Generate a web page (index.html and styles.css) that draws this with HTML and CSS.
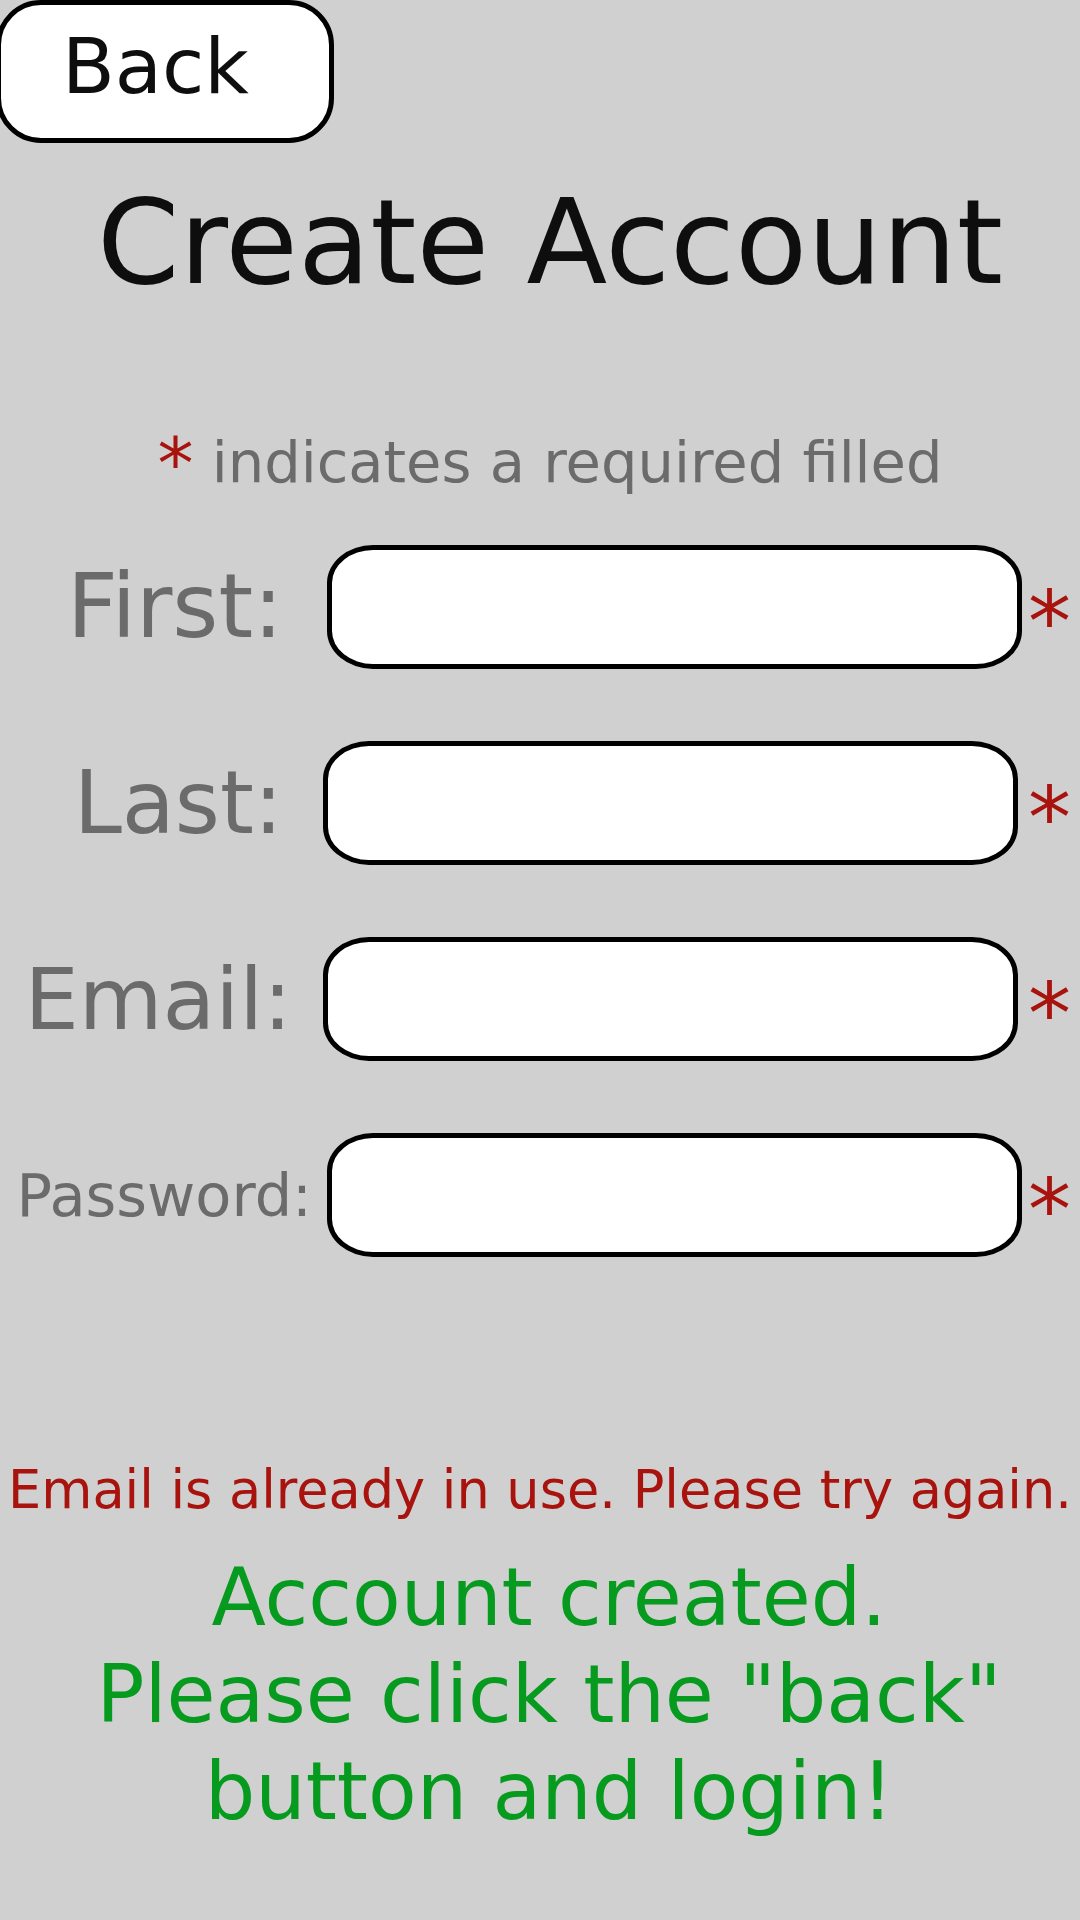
FILE: index.html
```html
<!DOCTYPE html>
<html lang="en">
<head>
<meta charset="utf-8">
<title>Create Account</title>
<link rel="stylesheet" href="styles.css">
</head>
<body>
<main class="page">
  <button class="back-btn" type="button">Back</button>
  <h1 class="title">Create Account</h1>
  <p class="note"><span class="note-star">*</span> indicates a required filled</p>
  <form class="form">
    <div class="row">
      <label class="label label-first" for="first">First:</label>
      <input class="field" id="first" type="text">
      <span class="req">*</span>
    </div>
    <div class="row row-narrow">
      <label class="label label-last" for="last">Last:</label>
      <input class="field" id="last" type="text">
      <span class="req">*</span>
    </div>
    <div class="row row-narrow">
      <label class="label label-email" for="email">Email:</label>
      <input class="field" id="email" type="text">
      <span class="req">*</span>
    </div>
    <div class="row">
      <label class="label label-password" for="password">Password:</label>
      <input class="field" id="password" type="password">
      <span class="req">*</span>
    </div>
  </form>
  <p class="error">Email is already in use. Please try again.</p>
  <p class="success">Account created.<br>Please click the "back"<br>button and login!</p>
</main>
</body>
</html>
```

FILE: styles.css
```css
html, body {
  margin: 0;
  padding: 0;
}

body {
  background: #d0d0d0;
  font-family: "DejaVu Sans", "Liberation Sans", sans-serif;
  width: 1080px;
  height: 1920px;
  overflow: hidden;
}

.page {
  display: flex;
  flex-direction: column;
}

.back-btn {
  align-self: flex-start;
  box-sizing: border-box;
  width: 338px;
  height: 143px;
  margin: 0 0 0 -4px;
  padding: 0 0 10px 61px;
  border: 5px solid #000;
  border-radius: 45px;
  background: #fff;
  color: #0e0e0e;
  font-family: inherit;
  font-size: 77px;
  line-height: 1;
  text-align: left;
  display: block;
}

.title {
  margin: 40px 0 0;
  padding-left: 20px;
  font-size: 118px;
  line-height: 118px;
  font-weight: normal;
  color: #0e0e0e;
  text-align: center;
}

.note {
  margin: 133px 0 0;
  padding-left: 20px;
  font-size: 57.5px;
  line-height: 57px;
  color: #6b6b6b;
  text-align: center;
}

.note-star {
  color: #a8130d;
  font-size: 72px;
  line-height: 0;
  vertical-align: -6px;
}

.form {
  margin-top: 54px;
  display: flex;
  flex-direction: column;
  gap: 72px;
}

.row {
  display: flex;
  align-items: center;
  height: 124px;
}

.label {
  flex: 0 0 327px;
  box-sizing: border-box;
  text-align: right;
  white-space: nowrap;
  color: #6b6b6b;
  line-height: 1;
}

.row-narrow .label {
  flex-basis: 323px;
}

.label-first {
  font-size: 88.5px;
  padding-right: 44px;
}

.label-last {
  font-size: 86.5px;
  padding-right: 40px;
}

.label-email {
  font-size: 86px;
  padding-right: 31px;
}

.label-password {
  font-size: 59px;
  padding-right: 15px;
}

.field {
  flex: 0 0 695px;
  box-sizing: border-box;
  width: 695px;
  height: 124px;
  margin: 0;
  padding: 0 36px;
  border: 5px solid #000;
  border-radius: 46px / 38px;
  background: #fff;
  font-family: inherit;
  font-size: 50px;
  outline: none;
}

.req {
  margin: 30px 0 0 6px;
  font-size: 86px;
  line-height: 1;
  color: #a8130d;
}

.row-narrow .req {
  margin-left: 10px;
}

.error {
  margin: 207px 0 0;
  font-size: 52.5px;
  line-height: 52.5px;
  color: #a8130d;
  text-align: center;
  white-space: nowrap;
}

.success {
  margin: 32px 0 0;
  padding-left: 18px;
  font-size: 79.6px;
  line-height: 97px;
  color: #069b1f;
  text-align: center;
}
```
